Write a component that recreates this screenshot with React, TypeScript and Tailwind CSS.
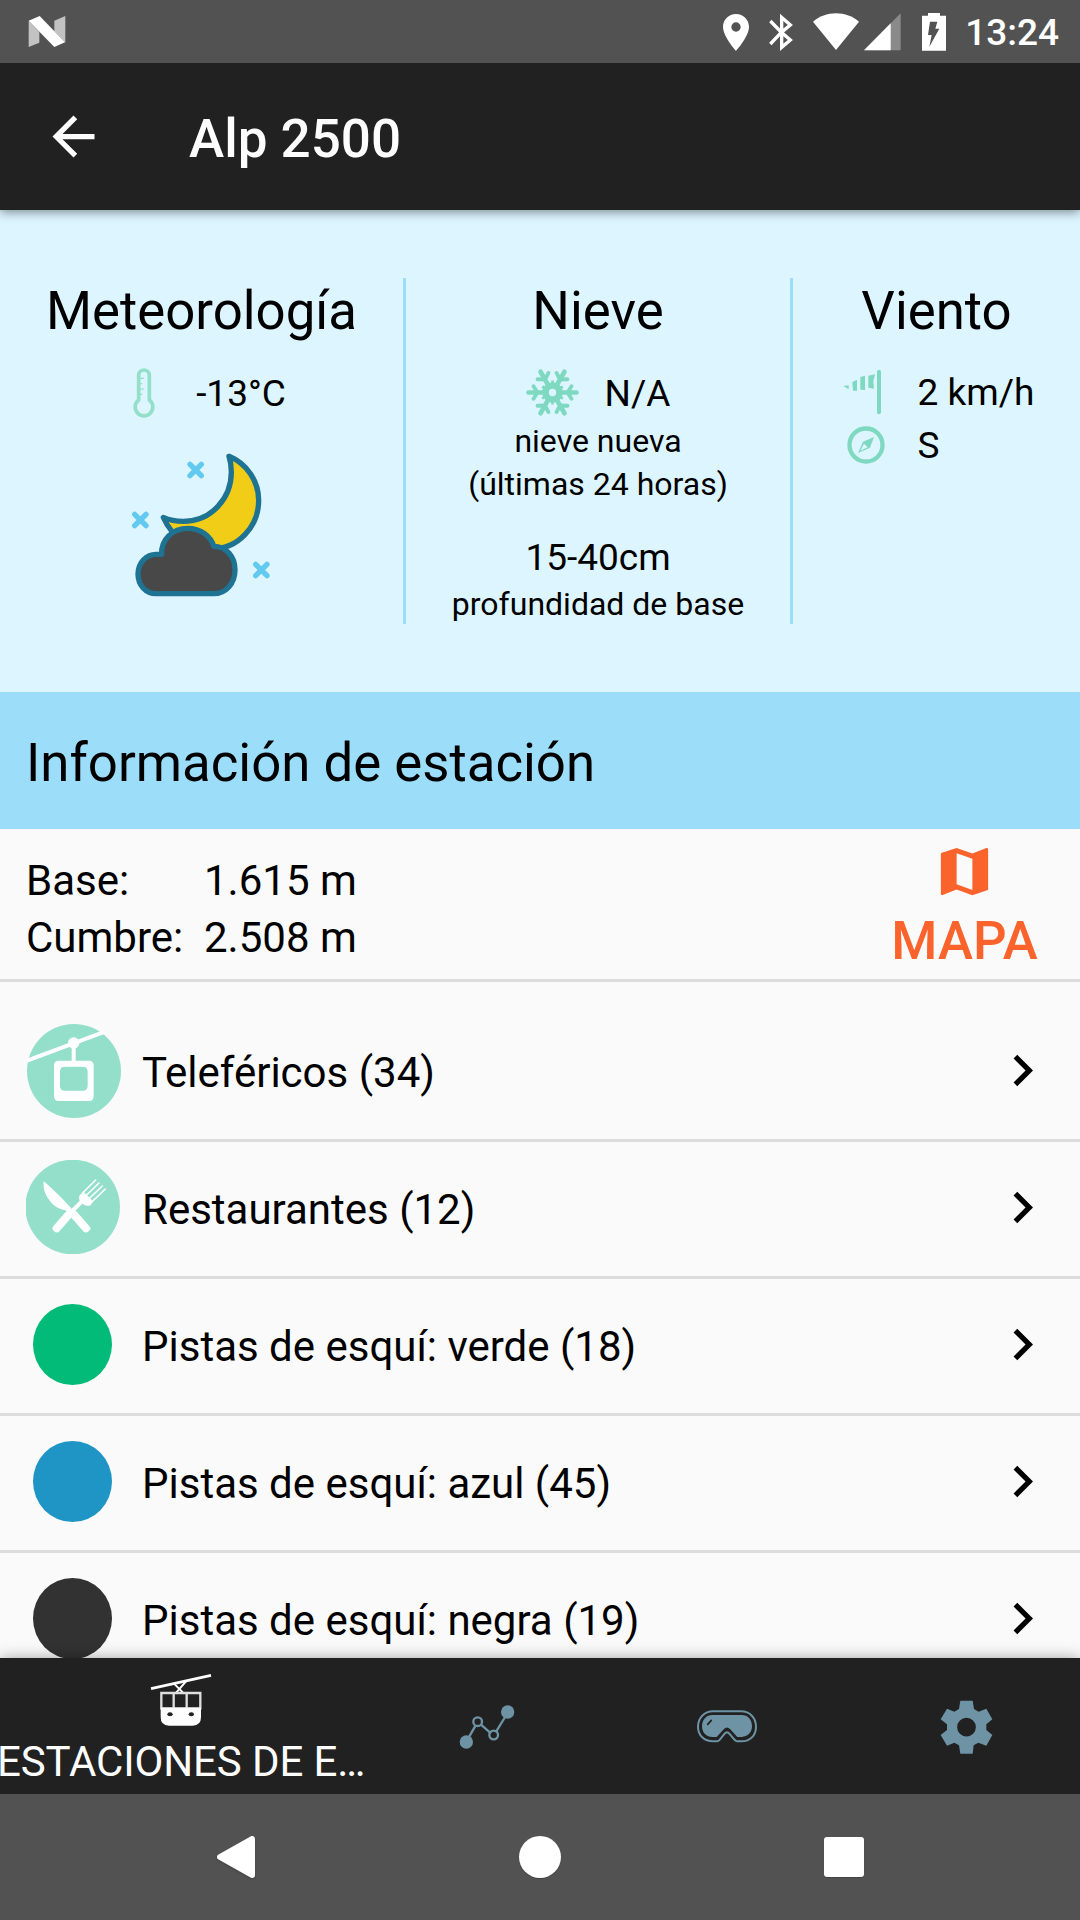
import React from "react";
import { MdArrowBack, MdChevronRight, MdMap } from "react-icons/md";

const MINT = "#7fd9c1";
const STEEL = "#6d93a5";

function StatusBar(): React.JSX.Element {
  return (
    <div className="relative z-10 flex h-[63px] shrink-0 items-center justify-between bg-[#525252] pl-[28px] pr-[21px]">
      <svg className="h-[31px] w-[38px]" viewBox="0 0 114 93">
        <path d="M2 14 34 48V80L2 93Z" fill="#c2c2c2" />
        <path d="M79 14 112 0V80L79 46Z" fill="#c2c2c2" />
        <path d="M2 14 35 0 111 79 79 93Z" fill="#fff" />
      </svg>
      <div className="flex items-center text-white">
        <svg className="mr-[20px] h-[38px] w-[26px]" viewBox="69 37 78 114" fill="currentColor">
          <path
            fillRule="evenodd"
            d="M108 40C86 40 69 57 69 79c0 29 39 72 39 72s39-43 39-72c0-22-17-39-39-39Zm0 25a14 14 0 1 1 0 28 14 14 0 0 1 0-28Z"
          />
        </svg>
        <svg className="mr-[20px] h-[38px] w-[24px]" viewBox="210 37 72 114" fill="none" stroke="currentColor" strokeWidth="10">
          <path d="M214 61 247 95 214 130" />
          <path d="M248 50V140L274 118 247 95 274 73Z" />
        </svg>
        <svg className="mr-[5px] h-[38px] w-[46px]" viewBox="339 37 138 114" fill="currentColor">
          <path d="M408 148 339 63C358 47 382 38 408 38s50 9 69 25Z" />
        </svg>
        <svg className="mr-[21px] h-[38px] w-[37px]" viewBox="492 37 111 114">
          <path d="M492 149 602 38V149Z" fill="#8a8a8a" />
          <path d="M492 149 572 68V149Z" fill="#fff" />
        </svg>
        <svg className="mr-[19px] h-[38px] w-[24px]" viewBox="666 37 72 114" fill="currentColor">
          <path d="M684 37H720V45H738V150H666V45H684Z" />
          <path d="M690 63H712L706 84H718L688 138 695 103H684Z" fill="#525252" />
        </svg>
        <span className="pt-[2px] text-[37px] font-medium leading-[40px]">13:24</span>
      </div>
    </div>
  );
}

function Thermometer(): React.JSX.Element {
  return (
    <svg className="h-[50px] w-[24px]" viewBox="396 319 72 150" fill="none" stroke="#94dfc9">
      <path strokeWidth="11" d="M416 415V341a16 16 0 0 1 32 0V415a26.500 26.500 0 1 1-32 0Z" />
      <path strokeWidth="3.500" d="M420 350h12M420 366h7M420 382h12M420 398h7" />
    </svg>
  );
}

function Snowflake(): React.JSX.Element {
  return (
    <svg className="size-[53px]" viewBox="-79.500 -79.500 159 159" fill="none" stroke={MINT} strokeLinecap="round">
      <circle r="21" strokeWidth="20" />
      {[0, 60, 120, 180, 240, 300].map((angle) => (
        <g key={angle} transform={`rotate(${angle})`}>
          <path strokeWidth="14" d="M24 0H72" />
          <path strokeWidth="11.500" d="M57-19 45 0 57 19" />
          <path strokeWidth="8" strokeLinecap="butt" d="M20 12 31 18" />
        </g>
      ))}
    </svg>
  );
}

function WindSock(): React.JSX.Element {
  return (
    <svg className="mr-[5px] h-[46px] w-[39px] shrink-0" viewBox="159 325 117 138" fill={MINT}>
      <path d="M267 333V455" stroke={MINT} strokeWidth="12" strokeLinecap="round" />
      <path d="M235 345 255 341 250 362 252 384 235 381Z" />
      <path d="M211 349 225 345V388L211 387Z" />
      <path d="M187 364 201 357V390H189Z" />
      <path d="M160 376 176 374V386Z" />
    </svg>
  );
}

function Compass(): React.JSX.Element {
  return (
    <svg className="ml-[1px] size-[38px]" viewBox="171 496 114 114">
      <circle cx="228" cy="553" r="49.500" fill="none" stroke={MINT} strokeWidth="13" />
      <path fillRule="evenodd" fill={MINT} d="M252 529 240 561 204 577 219 543ZM222 549 211 570 233 560Z" />
    </svg>
  );
}

function CloudyNight(): React.JSX.Element {
  return (
    <svg className="h-[144px] w-[138px]" viewBox="396 580 414 432" strokeLinejoin="round" strokeLinecap="round">
      <g stroke="#1f7392" strokeWidth="16">
        <path
          fill="#f2cd18"
          d="M687 590C741 612 776 665 776 722C776 800 715 868 635 868C575 868 520 840 490 773C508 781 530 785 550 785C635 785 694 715 694 637C694 620 692 605 687 590Z"
        />
        <path
          fill="#484848"
          d="M468 1002C437 1002 414 976 414 943C414 908 440 884 468 884H485C482 840 518 806 563 806C603 806 633 831 641 860C680 860 705 892 705 930C705 972 677 1002 641 1002Z"
        />
      </g>
      <path
        stroke="#62c9f1"
        strokeWidth="16"
        fill="none"
        d="M570 614 604 648M604 614 570 648M404 764 438 798M438 764 404 798M767 914 801 948M801 914 767 948"
      />
    </svg>
  );
}

function Measure({ icon, children }: { icon: React.ReactNode; children: React.ReactNode }): React.JSX.Element {
  return (
    <div className="flex h-[53px] items-center gap-[26px]">
      <div className="flex w-[53px] justify-center">{icon}</div>
      <span className="pt-[2px] text-[37px]">{children}</span>
    </div>
  );
}

function Weather(): React.JSX.Element {
  return (
    <section className="flex h-[482px] shrink-0 bg-[#ddf5ff] pt-[68px] text-center">
      <div className="flex h-[346px] w-[406px] flex-col items-center border-r-[3px] border-[#9cddf9]">
        <h2 className="mb-[22px] text-[52.75px] leading-[66px]">Meteorología</h2>
        <Measure icon={<Thermometer />}>-13°C</Measure>
        <div className="mr-[2px] mt-[34px]">
          <CloudyNight />
        </div>
      </div>
      <div className="flex h-[346px] w-[387px] flex-col items-center border-r-[3px] border-[#9cddf9]">
        <h2 className="mb-[22px] text-[52.75px] leading-[66px]">Nieve</h2>
        <Measure icon={<Snowflake />}>N/A</Measure>
        <p className="mt-[1px] text-[32px] leading-[43px]">
          nieve nueva
          <br />
          (últimas 24 horas)
        </p>
        <p className="mt-[30px] text-[37px] leading-[43px]">15-40cm</p>
        <p className="mt-[4px] text-[32px] leading-[43px]">profundidad de base</p>
      </div>
      <div className="flex flex-1 flex-col items-center">
        <h2 className="mb-[21px] text-[52.75px] leading-[66px]">Viento</h2>
        <div>
          <Measure icon={<WindSock />}>2 km/h</Measure>
          <Measure icon={<Compass />}>S</Measure>
        </div>
      </div>
    </section>
  );
}

function LiftBadge(): React.JSX.Element {
  return (
    <svg className="ml-[1px] mt-[1px] size-[94px]" viewBox="81 71 282 282">
      <circle cx="222" cy="212" r="141" fill="#94dfca" />
      <path d="M81 181 315 94" stroke="#fff" strokeWidth="12" />
      <circle cx="221" cy="128" r="17" fill="#fff" />
      <path d="M221 128V190" stroke="#fff" strokeWidth="12" />
      <path
        fill="#fff"
        fillRule="evenodd"
        d="M176 181H267Q281 181 281 195V288Q281 302 267 302H176Q162 302 162 288V195Q162 181 176 181ZM195 199Q180 199 180 214V256Q180 271 195 271H248Q263 271 263 256V214Q263 199 248 199Z"
      />
    </svg>
  );
}

function FoodBadge(): React.JSX.Element {
  return (
    <svg className="mb-[2px] size-[94px]" viewBox="78 480 282 282">
      <circle cx="218" cy="621" r="142" fill="#94dfca" />
      <path d="M131 544C160 568 188 597 215 626L207 639 196 631C186 628 168 624 154 608C136 588 128 566 131 544Z" fill="#fff" />
      <path d="M202 624 268 690" stroke="#fff" strokeWidth="13" />
      <path d="M222 644 258 685" stroke="#fff" strokeWidth="24" strokeLinecap="round" />
      <path d="M206 644 170 685" stroke="#fff" strokeWidth="24" strokeLinecap="round" />
      <path d="M206 644 250 600" stroke="#fff" strokeWidth="12" />
      <path d="M240 584 252 577 279 604 272 616C262 620 252 616 246 610C239 604 234 594 240 584Z" fill="#fff" />
      <path d="M247 580 287 540M256 589 297 549M265 598 307 558M274 607 316 567" stroke="#fff" strokeWidth="4.500" strokeLinecap="round" />
    </svg>
  );
}

const rows = [
  { label: "Teleféricos (34)", badge: <LiftBadge /> },
  { label: "Restaurantes (12)", badge: <FoodBadge /> },
  { label: "Pistas de esquí: verde (18)", badge: <div className="ml-[7px] h-[81px] w-[79px] rounded-[50%] bg-[#02bb78]" /> },
  { label: "Pistas de esquí: azul (45)", badge: <div className="ml-[7px] h-[81px] w-[79px] rounded-[50%] bg-[#1e95c5]" /> },
  { label: "Pistas de esquí: negra (19)", badge: <div className="ml-[7px] h-[81px] w-[79px] rounded-[50%] bg-[#323232]" /> },
];

function StationInfo(): React.JSX.Element {
  return (
    <section className="flex min-h-0 flex-1 flex-col overflow-hidden">
      <h2 className="flex h-[137px] shrink-0 items-center bg-[#9cddf9] pl-[26px] pt-[6px] text-[52.75px]">
        Información de estación
      </h2>
      <div className="flex h-[153px] shrink-0 justify-between border-b-[3px] border-[#dcdcdc]">
        <dl className="grid h-[114px] grid-cols-[178px_auto] pl-[26px] pt-[23px] text-[42px] leading-[57px]">
          <dt>Base:</dt>
          <dd>1.615 m</dd>
          <dt>Cumbre:</dt>
          <dd>2.508 m</dd>
        </dl>
        <button className="flex w-[231px] flex-col items-center pt-[11px] text-[#fb632c]">
          <MdMap className="size-[63px]" />
          <span className="mt-[7px] text-[52.75px] font-medium leading-[62px]">MAPA</span>
        </button>
      </div>
      <ul className="mt-[23px]">
        {rows.map((row) => (
          <li key={row.label} className="flex h-[137px] items-center border-b-[3px] border-[#dcdcdc] pb-[3px] pl-[26px] pr-[26px]">
            <div className="w-[116px]">{row.badge}</div>
            <span className="flex-1 pt-[3px] text-[42px]">{row.label}</span>
            <MdChevronRight className="size-[63px]" />
          </li>
        ))}
      </ul>
    </section>
  );
}

function TabBar(): React.JSX.Element {
  return (
    <nav className="relative flex h-[136px] shrink-0 bg-[#212121] text-[#fdfdfd] shadow-[0_0_14px_rgba(0,0,0,0.35)]">
      <div className="flex w-[367px] shrink-0 flex-col items-center pr-[5px] pt-[15px]">
        <svg className="h-[53px] w-[62px]" viewBox="0 0 186 159">
          <path d="M3 47 183 7" stroke="#fdfdfd" strokeWidth="8" />
          <path d="M108 25 76 62M72 32 102 62" stroke="#fdfdfd" strokeWidth="6" />
          <path d="M34 60H151V106H34ZM71 60V106M110 60V106" stroke="#dedede" strokeWidth="7" fill="none" />
          <path d="M32 104H153V132Q153 158 128 158H57Q32 158 32 132Z" fill="#fdfdfd" />
          <ellipse cx="60" cy="124" rx="8" ry="6" fill="#212121" />
          <ellipse cx="124" cy="124" rx="8" ry="6" fill="#212121" />
        </svg>
        <span className="mt-[11px] w-[368px] whitespace-nowrap text-[42px] leading-[49px] tracking-[-0.12px]">ESTACIONES DE E…</span>
      </div>
      <div className="flex w-[240px] shrink-0 items-center justify-center pt-[2px]">
        <svg className="h-[44px] w-[56px]" viewBox="0 0 168 132">
          <g stroke={STEEL} strokeWidth="7" fill="none">
            <path d="M22 110 50 61M65 58 96 85M110 82 142 30" />
            <circle cx="56" cy="50" r="13" />
            <circle cx="104" cy="90" r="13" />
          </g>
          <circle cx="22" cy="111" r="20" fill={STEEL} />
          <circle cx="146" cy="21" r="20" fill={STEEL} />
        </svg>
      </div>
      <div className="flex w-[240px] shrink-0 items-center justify-center">
        <svg className="h-[33px] w-[60px]" viewBox="21 56 180 97">
          <path
            fill="none"
            stroke={STEEL}
            strokeWidth="6"
            d="M69 59H153C180 59 198 79 198 105C198 132 180 149 155 149H142C135 149 128 137 120 128C113 120 109 120 102 128C94 137 89 149 81 149H69C43 149 24 131 24 105C24 79 43 59 69 59Z"
          />
          <path
            fill={STEEL}
            d="M67 70H155C174 70 186 84 186 104C186 123 173 135 155 136H142L120 112Q111 103 102 112L80 136H68C49 136 36 123 36 104C36 84 49 70 67 70Z"
          />
          <path d="M53 98 64 86" stroke="#212121" strokeWidth="5" strokeLinecap="round" />
        </svg>
      </div>
      <div className="flex w-[238px] shrink-0 items-center justify-center pt-[1px]">
        <svg className="h-[54px] w-[53px]" viewBox="750 22 159 162">
          <path
            fill={STEEL}
            fillRule="evenodd"
            d="M811 24H848L852 49 866 57 889 48 907 80 889 95V112L907 127 889 159 865 150 851 158 848 183H811L807 158 793 150 771 159 752 127 771 112V95L752 80 771 48 793 57 807 49ZM829.500 75.500a28 28 0 1 0 0 56 28 28 0 0 0 0-56Z"
          />
        </svg>
      </div>
    </nav>
  );
}

function SystemNav(): React.JSX.Element {
  return (
    <div className="relative flex h-[126px] shrink-0 items-center justify-between bg-[#525252] pb-[1px] pl-[217px] pr-[216px]">
      <svg className="h-[42px] w-[38px] drop-shadow-[0_1px_1px_rgba(0,0,0,0.2)]" viewBox="0 0 38 42">
        <path d="M3 21 35 3V39Z" fill="#fff" stroke="#fff" strokeWidth="6" strokeLinejoin="round" />
      </svg>
      <div className="size-[42px] rounded-full bg-white shadow-[0_1px_1px_rgba(0,0,0,0.2)]" />
      <div className="size-[40px] rounded-[3px] bg-white shadow-[0_1px_1px_rgba(0,0,0,0.2)]" />
    </div>
  );
}

export default function App(): React.JSX.Element {
  return (
    <div className="flex h-[1920px] w-[1080px] flex-col overflow-hidden bg-[#fafafa] font-['Roboto',sans-serif] text-black">
      <StatusBar />
      <header className="relative flex h-[147px] shrink-0 items-center bg-[#212121] pl-[42px] text-[#fdfdfd] shadow-[0_2px_10px_rgba(0,0,0,0.45)]">
        <MdArrowBack className="size-[63px]" />
        <h1 className="ml-[84px] pt-[6px] text-[53px] font-medium">Alp 2500</h1>
      </header>
      <Weather />
      <StationInfo />
      <TabBar />
      <SystemNav />
    </div>
  );
}
